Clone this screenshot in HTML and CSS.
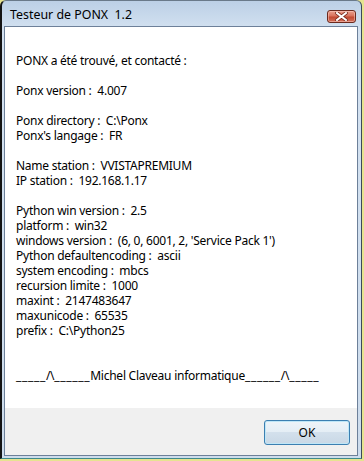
FILE: index.html
```html
<!DOCTYPE html>
<html lang="fr">
<head>
<meta charset="utf-8">
<title>Testeur de PONX 1.2</title>
<link rel="stylesheet" href="styles.css">
</head>
<body>
<div class="window">
  <div class="titlebar">
    <span class="title">Testeur de PONX  1.2</span>
    <button class="close" aria-label="Fermer">
      <svg width="13" height="9" viewBox="0 0 13 9"><path d="M2 1 L11 8 M11 1 L2 8" stroke="#7a2a1c" stroke-width="3.6" stroke-linecap="square" fill="none"/><path d="M2 1 L11 8 M11 1 L2 8" stroke="#fff" stroke-width="2" stroke-linecap="square" fill="none"/></svg>
    </button>
  </div>
  <div class="client">
    <div class="content">
      <p>PONX a été trouvé, et contacté :</p>
      <p class="gap">Ponx version :  4.007</p>
      <p class="gap">Ponx directory :  C:\Ponx</p>
      <p>Ponx's langage :  FR</p>
      <p class="gap">Name station :  VVISTAPREMIUM</p>
      <p>IP station :  192.168.1.17</p>
      <p class="gap">Python win version :  2.5</p>
      <p>platform :  win32</p>
      <p>windows version :  (6, 0, 6001, 2, 'Service Pack 1')</p>
      <p>Python defaultencoding :  ascii</p>
      <p>system encoding :  mbcs</p>
      <p>recursion limite :  1000</p>
      <p>maxint :  2147483647</p>
      <p>maxunicode :  65535</p>
      <p>prefix :  C:\Python25</p>
      <p class="gap2"><span class="u">_____</span>/\<span class="u">______</span>Michel Claveau informatique<span class="u">______</span>/\<span class="u">_____</span></p>
    </div>
    <div class="footer">
      <button class="ok">OK</button>
    </div>
  </div>
</div>
</body>
</html>
```
FILE: styles.css
```css
html, body {
  margin: 0;
  padding: 0;
}
body {
  width: 364px;
  height: 461px;
  background: #e6e390;
  overflow: hidden;
  font-family: "Noto Sans", "Open Sans", sans-serif;
}
.window {
  box-sizing: border-box;
  width: 362px;
  height: 459px;
  border-left: 2px solid #141414;
  border-top: 1px solid #6a7a8a;
  border-right: 1px solid #3a4a5a;
  border-bottom: 1px solid #3f8a8a;
  border-radius: 6px 6px 0 0;
  background: linear-gradient(#bcd0e6, #d4e2f1 30px, #cddcec);
  display: flex;
  flex-direction: column;
  padding: 0 3px 2px 2px;
}
.titlebar {
  height: 25px;
  display: flex;
  align-items: center;
  justify-content: space-between;
  padding-left: 6px;
  padding-right: 2px;
}
.title {
  white-space: pre;
  font-size: 12.4px;
  color: #000;
  padding-top: 2px;
}
.close {
  width: 29px;
  height: 13px;
  margin-top: 5px;
  padding: 0;
  border: 1px solid #6b2a1e;
  border-radius: 3px;
  background: linear-gradient(#eaa08e, #d9735d 45%, #c24a32 55%, #d5705a);
  display: flex;
  align-items: center;
  justify-content: center;
  box-shadow: inset 0 0 0 1px rgba(255,210,200,0.5);
}
.client {
  flex: 1;
  background: #fff;
  border: 1px solid #6d8099;
  display: flex;
  flex-direction: column;
}
.content {
  flex: 1;
  padding: 26px 0 0 11px;
  font-size: 12px;
  line-height: 15px;
  letter-spacing: -0.25px;
  color: #000;
}
.content p {
  margin: 0;
  white-space: pre;
}
.content .gap {
  margin-top: 15px;
}
.content .gap2 {
  margin-top: 30px;
}
.content .u {
  letter-spacing: 0.65px;
}
.footer {
  height: 47px;
  background: #f0f0f0;
  display: flex;
  justify-content: flex-end;
  align-items: flex-start;
  padding: 12px 7px 0 0;
  box-sizing: border-box;
}
.ok {
  width: 86px;
  height: 25px;
  border: 1px solid #3c7fb1;
  border-radius: 3px;
  background: linear-gradient(#eef4f9, #e4edf5 50%, #d3e0ec 50%, #c9d8e6);
  box-shadow: inset 0 0 0 1px #bfe6f7;
  font-family: "Noto Sans", "Open Sans", sans-serif;
  font-size: 12px;
  color: #000;
  padding: 0;
}
```
